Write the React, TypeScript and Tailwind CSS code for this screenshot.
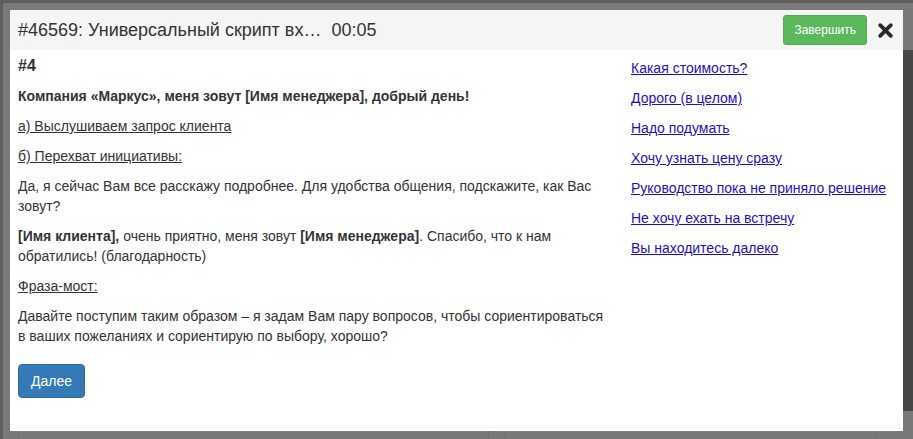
const LINKS = [
  "Какая стоимость?",
  "Дорого (в целом)",
  "Надо подумать",
  "Хочу узнать цену сразу",
  "Руководство пока не приняло решение",
  "Не хочу ехать на встречу",
  "Вы находитесь далеко",
];

function CloseIcon() {
  return (
    <svg width="17" height="17" viewBox="0 0 16 16" className="block">
      <path
        d="M3 3 L13 13 M13 3 L3 13"
        stroke="#2b2b2b"
        strokeWidth="3.6"
        strokeLinecap="round"
      />
    </svg>
  );
}

export default function App() {
  return (
    <div
      className="w-[913px] h-[439px] overflow-hidden bg-[#797979] border-t-[3px] border-l-[3px] border-[#5e5e5e] flex flex-col"
      style={{ fontFamily: '"Liberation Sans", Arial, sans-serif' }}
    >
      <div className="flex pt-[7px] pl-[7px]">
        {/* modal */}
        <div className="w-[893px] h-[421px] bg-white flex flex-col">
          <div className="h-[40px] bg-[#f5f5f5] flex items-center justify-between pl-[8px] pr-[9px]">
            <h4 className="text-[18px] leading-[20px] text-[#333] whitespace-pre">
              #46569: Универсальный скрипт вх…  00:05
            </h4>
            <div className="flex items-center gap-[10px]">
              <button className="h-[30px] px-[10px] bg-[#5cb85c] border border-[#4cae4c] rounded-[3px] text-white text-[12px] leading-[18px]">
                Завершить
              </button>
              <CloseIcon />
            </div>
          </div>

          <div className="flex px-[8px] text-[14px] leading-[20px] text-[#333]">
            <div className="w-[594px] pt-[6px]">
              <h4 className="text-[16px] font-bold leading-[20px] mb-[10px]">#4</h4>
              <p className="font-bold mb-[10px]">
                Компания «Маркус», меня зовут [Имя менеджера], добрый день!
              </p>
              <p className="underline mb-[10px]">а) Выслушиваем запрос клиента</p>
              <p className="underline mb-[10px]">б) Перехват инициативы:</p>
              <p className="mb-[10px]">
                Да, я сейчас Вам все расскажу подробнее. Для удобства общения, подскажите, как Вас зовут?
              </p>
              <p className="mb-[10px]">
                <b>[Имя клиента],</b> очень приятно, меня зовут <b>[Имя менеджера]</b>. Спасибо, что к нам
                обратились! (благодарность)
              </p>
              <p className="underline mb-[10px]">Фраза-мост:</p>
              <p>
                Давайте поступим таким образом – я задам Вам пару вопросов, чтобы сориентироваться в
                ваших пожеланиях и сориентирую по выбору, хорошо?
              </p>
              <button className="mt-[18px] h-[34px] px-[12px] bg-[#337ab7] border border-[#2e6da4] rounded-[4px] text-white text-[14px] leading-[20px]">
                Далее
              </button>
            </div>

            <div className="ml-[19px] pt-[8px] flex flex-col gap-[10px]">
              {LINKS.map((l) => (
                <a key={l} href="#" className="text-[#1f0fc4] underline leading-[20px]">
                  {l}
                </a>
              ))}
            </div>
          </div>
        </div>

        {/* scrollbar strip */}
        <div className="w-[10px] flex flex-col">
          <div className="h-[40px]" />
          <div className="h-[361px] bg-[#474747]" />
        </div>
      </div>

      {/* page behind the overlay */}
      <div className="flex-1 flex">
        <div className="w-[16px] border-r border-[#737373]" />
        <div className="w-[470px] border-r border-[#6f6f6f]" />
        <div className="w-[16px] border-r border-[#737373]" />
        <div className="flex-1 border-r border-[#737373]" />
        <div className="w-[36px]" />
      </div>
    </div>
  );
}
